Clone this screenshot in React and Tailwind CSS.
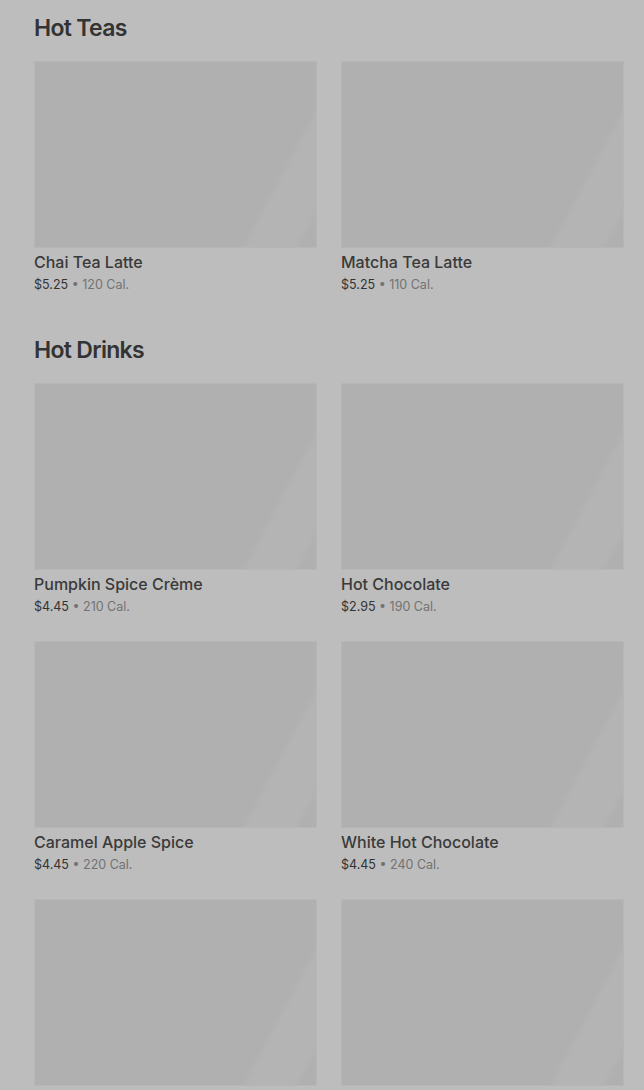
const sections = [
  {
    title: 'Hot Teas',
    items: [
      { name: 'Chai Tea Latte', price: '$5.25', cal: '120 Cal.' },
      { name: 'Matcha Tea Latte', price: '$5.25', cal: '110 Cal.' },
    ],
  },
  {
    title: 'Hot Drinks',
    items: [
      { name: 'Pumpkin Spice Crème', price: '$4.45', cal: '210 Cal.' },
      { name: 'Hot Chocolate', price: '$2.95', cal: '190 Cal.' },
      { name: 'Caramel Apple Spice', price: '$4.45', cal: '220 Cal.' },
      { name: 'White Hot Chocolate', price: '$4.45', cal: '240 Cal.' },
      // below the fold, only the image shows
      { id: 'more-1' },
      { id: 'more-2' },
    ],
  },
];

const MenuCard = ({ item }) => (
  <div>
    <div className="h-[187px] border border-[#b6b6b6] bg-[linear-gradient(118deg,#b0b0b0_0%,#b0b0b0_80%,#b4b4b4_82%,#b4b4b4_94%,#b0b0b0_96%,#b0b0b0_100%)]" />
    {item.name && (
      <>
        <div className="mt-1 text-base font-medium leading-5 text-[#3a3a3a]">
          {item.name}
        </div>
        <div className="mt-1 text-[12.5px] leading-[18px]">
          <span className="text-[#333333]">{item.price}</span>
          <span className="text-[#727272]"> • {item.cal}</span>
        </div>
      </>
    )}
  </div>
);

export default function App() {
  return (
    <div
      className="h-[1090px] overflow-hidden bg-[#bdbdbd] pl-[34px] pr-5"
      style={{ fontFamily: 'Inter, "Noto Sans", sans-serif' }}
    >
      {sections.map((section, i) => (
        <section key={section.title} className={i === 0 ? 'pt-3' : 'mt-10'}>
          <h2 className="mb-[17px] text-[23px] font-semibold leading-8 tracking-[-0.03em] text-[#333333]">
            {section.title}
          </h2>
          <div className="grid grid-cols-2 gap-x-6 gap-y-[25px]">
            {section.items.map((item) => (
              <MenuCard key={item.name || item.id} item={item} />
            ))}
          </div>
        </section>
      ))}
    </div>
  );
}
